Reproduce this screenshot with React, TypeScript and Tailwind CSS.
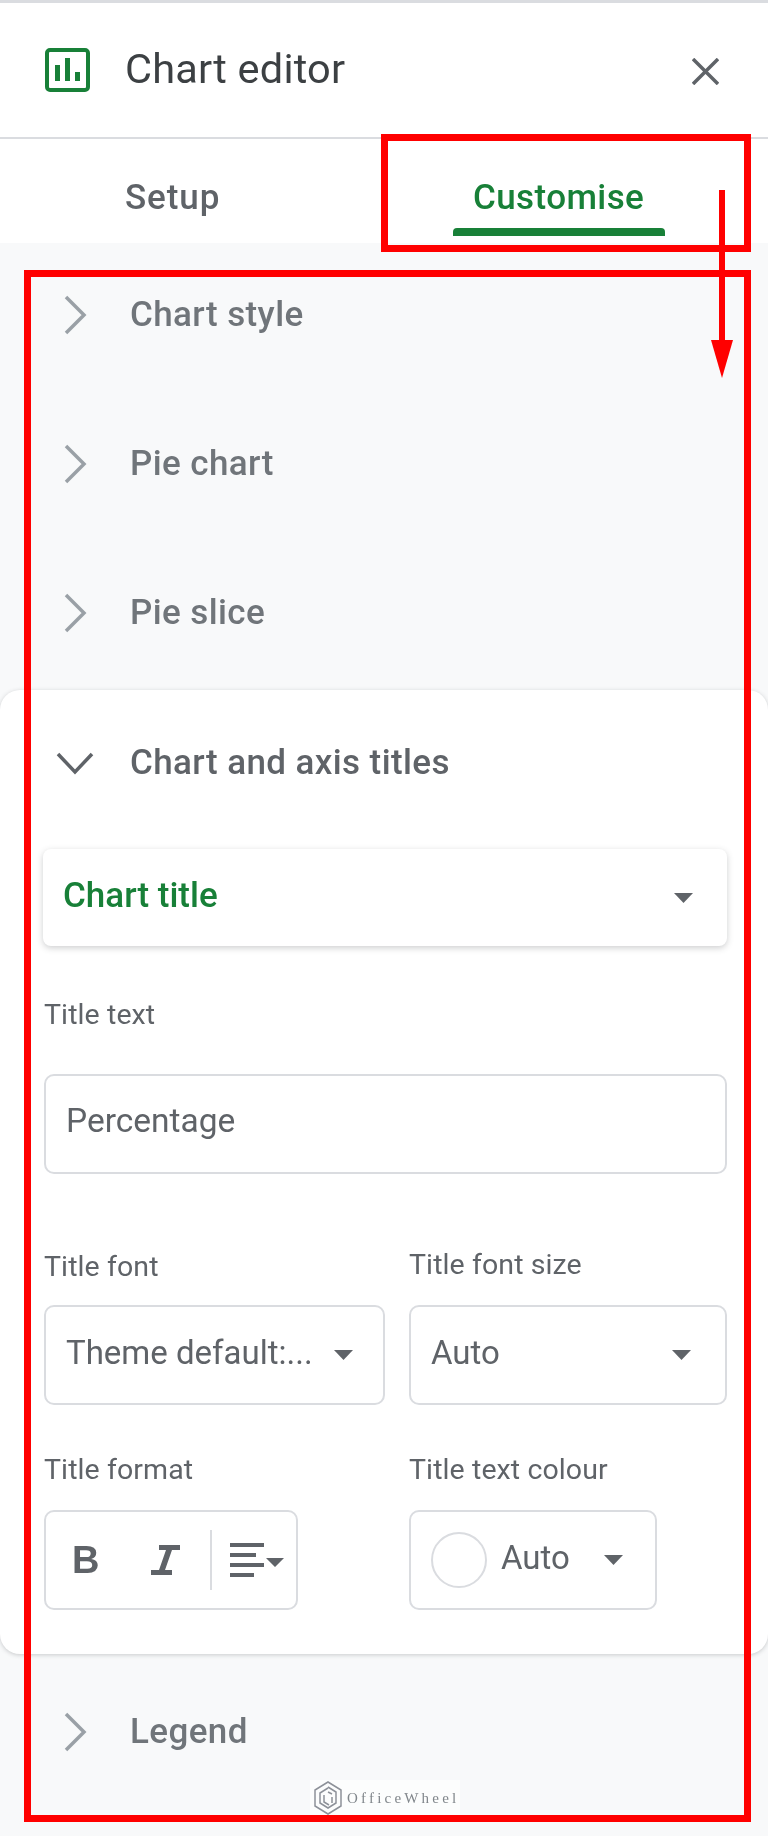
const Chevron = () => (
  <svg width="24" height="40" viewBox="0 0 24 40" fill="none" stroke="#9aa0a6" strokeWidth="3.5">
    <path d="M3 2 L21 20 L3 38" />
  </svg>
);

const Caret = () => (
  <svg width="19" height="10" viewBox="0 0 19 10" fill="#5f6368">
    <path d="M0 0 H19 L9.5 10 Z" />
  </svg>
);

const Row = ({ label }: { label: string }) => (
  <div className="flex h-[149px] items-center">
    <div className="ml-[63px] flex w-[67px] shrink-0">
      <Chevron />
    </div>
    <span className="pt-[2px] text-[35px] font-medium tracking-[0.4px] text-[#70757a]">{label}</span>
  </div>
);

const Label = ({ children }: { children: string }) => (
  <div className="flex h-[40px] items-center text-[28.5px] tracking-[0.1px] text-[#5f6368]">{children}</div>
);

const Select = ({ value, pad }: { value: string; pad: string }) => (
  <div className={`flex h-[100px] items-center justify-between rounded-[10px] border-2 border-[#dadce0] pl-[20px] ${pad}`}>
    <span className="pb-[4px] text-[33px] text-[#5f6368]">{value}</span>
    <Caret />
  </div>
);

const App = () => {
  return (
    <div className="relative h-[1836px] w-[768px] overflow-hidden bg-[#f8f9fa] font-['Roboto',sans-serif] blur-[0.6px]">
      <header className="flex h-[139px] items-center border-t-[3px] border-b-2 border-[#dadce0] bg-white">
        <svg className="ml-[45px]" width="45" height="44" viewBox="0 0 45 44" fill="none">
          <rect x="2" y="2" width="41" height="40" rx="3" stroke="#188038" strokeWidth="4" />
          <path d="M10 17h5v16h-5zM20 10h5v23h-5zM30 24h5v9h-5z" fill="#188038" />
        </svg>
        <h1 className="ml-[35px] pb-[2px] text-[41.5px] leading-none tracking-[0.2px] text-[#3c4043]">Chart editor</h1>
        <svg className="ml-auto mr-[49px] mt-[3px]" width="27" height="27" viewBox="0 0 27 27" stroke="#5f6368" strokeWidth="3.5">
          <path d="M1 1 L26 26 M26 1 L1 26" />
        </svg>
      </header>

      <nav className="grid h-[104px] grid-cols-[382px_386px] bg-white">
        <div className="flex h-[118px] items-center pl-[125px] text-[35px] font-medium tracking-[0.9px] text-[#5f6368]">Setup</div>
        <div className="relative flex h-[118px] items-center pl-[91px] text-[35px] font-medium tracking-[0.4px] text-[#188038]">
          Customise
          <div className="absolute left-[71px] top-[89px] h-[8px] w-[212px] rounded-t-[4px] bg-[#188038]" />
        </div>
      </nav>

      <div className="-mt-[3px]">
        <Row label="Chart style" />
        <Row label="Pie chart" />
        <Row label="Pie slice" />
      </div>

      <section className="mt-[3px] rounded-[20px] bg-white pb-[44px] pl-[44px] shadow-[0_1px_4px_rgba(60,64,67,0.25)]">
        <div className="flex h-[146px] items-center">
          <svg className="ml-[12px]" width="38" height="23" viewBox="0 0 38 23" fill="none" stroke="#5f6368" strokeWidth="3.5">
            <path d="M2 2 L19 20 L36 2" />
          </svg>
          <span className="ml-[36px] text-[35px] font-medium tracking-[0.4px] text-[#5f6368]">Chart and axis titles</span>
        </div>

        <div className="mt-[13px] flex h-[97px] w-[684px] -translate-x-px items-center justify-between rounded-[8px] bg-white pl-[20px] pr-[34px] shadow-[0_2px_6px_rgba(60,64,67,0.25)]">
          <span className="pb-[3px] text-[35px] font-medium text-[#188038]">Chart title</span>
          <Caret />
        </div>

        <div className="mt-[49px]">
          <Label>Title text</Label>
        </div>
        <div className="mt-[39px] flex h-[100px] w-[683px] items-center rounded-[10px] border-2 border-[#dadce0] pb-[6px] pl-[20px] text-[33.5px] text-[#5f6368]">
          Percentage
        </div>

        <div className="mt-[71px] grid grid-cols-[341px_318px] gap-x-[24px]">
          <div className="pt-[2px]">
            <Label>Title font</Label>
          </div>
          <Label>Title font size</Label>
          <div className="mt-[18px]">
            <Select value="Theme default:..." pad="pr-[30px]" />
          </div>
          <div className="mt-[18px]">
            <Select value="Auto" pad="pr-[34px]" />
          </div>

          <div className="mt-[45px]">
            <Label>Title format</Label>
          </div>
          <div className="mt-[45px]">
            <Label>Title text colour</Label>
          </div>

          <div className="mt-[20px] flex h-[100px] w-[254px] items-center rounded-[10px] border-2 border-[#dadce0]">
            <span className="ml-[26px] w-[60px] font-['Liberation_Sans',sans-serif] text-[38px] font-bold leading-none text-[#5f6368]">B</span>
            <svg className="ml-[18px]" width="30" height="30" viewBox="0 0 30 30" fill="#5f6368">
              <path d="M9 0h21v5h-8l-7 20h7v5H1v-5h8l7-20H9z" />
            </svg>
            <div className="ml-[30px] h-[60px] w-[2px] bg-[#dadce0]" />
            <svg className="ml-[18px]" width="56" height="34" viewBox="0 0 56 34" fill="#5f6368">
              <path d="M0 0h34v4H0zM0 10h26v4H0zM0 20h34v4H0zM0 30h24v4H0zM36 15h18l-9 9z" />
            </svg>
          </div>
          <div className="mt-[20px] flex h-[100px] w-[248px] items-center rounded-[10px] border-2 border-[#dadce0] pl-[20px]">
            <div className="h-[56px] w-[56px] rounded-full border-2 border-[#dadce0]" />
            <span className="ml-[14px] pb-[4px] text-[33px] text-[#5f6368]">Auto</span>
            <div className="ml-[34px] flex">
              <Caret />
            </div>
          </div>
        </div>
      </section>

      <div className="mt-[3px]">
        <Row label="Legend" />
      </div>

      {/* watermark */}
      <div className="absolute left-[310px] top-[1780px] flex h-[36px] w-[150px] items-center bg-white/60">
        <svg className="ml-[4px]" width="28" height="34" viewBox="0 0 28 34" fill="none" stroke="#8d9199" strokeWidth="1.5">
          <path d="M14 1 L27 9 V25 L14 33 L1 25 V9 Z" />
          <path d="M14 6 L22 11 V22 L14 27 L6 22 V12 L14 7 M10 14 V21 L15 24 M18 13 L14 11 M18 16 V22" />
        </svg>
        <span className="ml-[5px] font-['Liberation_Serif',serif] text-[15px] tracking-[3.2px] text-[#80868b]">OfficeWheel</span>
      </div>

      {/* red annotations */}
      <div className="absolute left-[381px] top-[134px] h-[118px] w-[370px] border-[7px] border-[#ff0000]" />
      <div className="absolute left-[24px] top-[270px] h-[1552px] w-[727px] border-[7px] border-[#ff0000]" />
      <svg className="absolute left-[708px] top-[190px]" width="28" height="190" viewBox="0 0 28 190" fill="#ff0000">
        <path d="M11 0h6v150h-6z" />
        <path d="M3 150h22l-11 38z" />
      </svg>
    </div>
  );
};

export default App;
